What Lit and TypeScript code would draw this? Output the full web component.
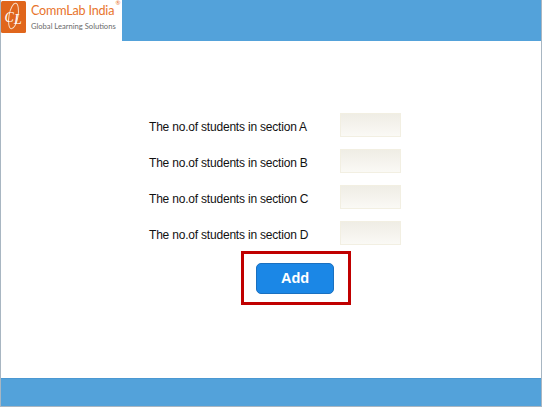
import { LitElement, html, css } from "lit";
import { customElement } from "lit/decorators.js";

@customElement("app-root")
export class AppRoot extends LitElement {
  static styles = css`
    :host { display: block; width: 542px; height: 407px; font-family: "Liberation Sans", Arial, sans-serif; }
    .frame { box-sizing: border-box; width: 542px; height: 407px; border: 1px solid #a8b6c2; border-top: 0; display: flex; flex-direction: column; background: #fff; }
    .header { height: 41px; background: #53a2da; display: flex; flex: none; }
    .logo { width: 121px; background: #fff; display: flex; gap: 5px; box-sizing: border-box; padding-top: 1px; }
    .mark { width: 25px; height: 32px; flex: none; display: block; }
    .brand { display: flex; flex-direction: column; padding-top: 2px; white-space: nowrap; }
    .name { font-family: "Lato", sans-serif; font-size: 12.6px; letter-spacing: -0.2px; line-height: 15px; color: #e8742c; position: relative; display: inline-block; width: fit-content; padding-right: 6px; }
    .name sup { font-size: 6px; line-height: 1; color: #e8742c; position: absolute; top: -3px; right: 0; }
    .tag { font-family: "Lato", sans-serif; font-size: 7.6px; line-height: 10px; margin-top: 3px; color: #6b6b6b; }
    .main { flex: 1; display: flex; flex-direction: column; align-items: flex-start; padding: 72px 0 0 148px; }
    .row { display: flex; align-items: center; height: 24px; margin-bottom: 12px; }
    .label { width: 191px; font-size: 12px; color: #111; white-space: nowrap; letter-spacing: -0.2px; padding-top: 3px; }
    .field { box-sizing: border-box; width: 61px; height: 24px; border: 1px solid #f2efe2; background: linear-gradient(#efede5, #faf9f5); }
    .callout { box-sizing: border-box; width: 110px; height: 54px; border: 3px solid #c00000; margin: -6px 0 0 92px; display: flex; align-items: center; justify-content: center; }
    .add { box-sizing: border-box; width: 78px; height: 31px; margin-right: 2px; background: #1b87e6; border: 1px solid #1a70c0; border-radius: 5px; color: #fff; font: bold 14.5px "Liberation Sans", Arial, sans-serif; padding: 0; }
    .footer { box-sizing: border-box; height: 28px; flex: none; background: #53a2da; border-top: 1px solid #4b98d2; }
  `;

  render() {
    const sections = ["A", "B", "C", "D"];
    return html`
      <div class="frame">
        <div class="header">
          <div class="logo">
            <svg class="mark" viewBox="0 0 25 32">
              <rect x="0" y="0" width="25" height="32" rx="1.5" fill="#e0661c" />
              <ellipse cx="12.5" cy="15" rx="4.5" ry="13" fill="none" stroke="#f8dcc6" stroke-width="1" transform="rotate(10 12.5 15)" />
              <text x="3.5" y="21" font-family="Liberation Serif, serif" font-style="italic" font-size="14" fill="#fff">C</text>
              <text x="13" y="23" font-family="Liberation Serif, serif" font-style="italic" font-size="14" fill="#fff">L</text>
            </svg>
            <div class="brand">
              <div class="name">CommLab India<sup>®</sup></div>
              <div class="tag">Global Learning Solutions</div>
            </div>
          </div>
        </div>
        <div class="main">
          ${sections.map(s => html`
            <div class="row">
              <div class="label">The no.of students in section ${s}</div>
              <div class="field"></div>
            </div>
          `)}
          <div class="callout"><button class="add">Add</button></div>
        </div>
        <div class="footer"></div>
      </div>
    `;
  }
}
